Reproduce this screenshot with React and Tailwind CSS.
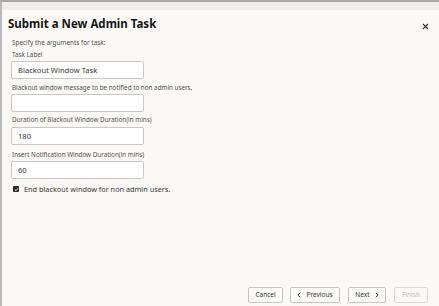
import React from "react";

const fields = [
  { label: "Task Label", value: "Blackout Window Task", gap: "mt-[2px]", inGap: "mt-[1px]" },
  { label: "Blackout window message to be notified to non admin users.", value: "", gap: "mt-[4px]", inGap: "mt-[1px]" },
  { label: "Duration of Blackout Window Duration(in mins)", value: "180", gap: "mt-[3px]", inGap: "mt-[2px]" },
  { label: "Insert Notification Window Duration(in mins)", value: "60", gap: "mt-[5px]", inGap: "mt-[1px]" },
];

export default function App() {
  return (
    <div
      className="w-[439px] h-[306px] bg-[#faf9f7] border-t-2 border-l-2 border-t-[#a8a8a8] border-l-[#b8b8b8] flex flex-col text-[#161513] overflow-hidden"
      style={{ fontFamily: '"Noto Sans", "Open Sans", sans-serif' }}
    >
      {/* top strip */}
      <div className="h-[8px] bg-[#efeeec]" />

      {/* header */}
      <div className="flex items-center justify-between pl-[6px] pr-[10px] mt-[6px] h-[16px]">
        <h1 className="text-[11.5px] leading-[16px] font-bold">Submit a New Admin Task</h1>
        <svg width="7" height="7" viewBox="0 0 7 7" className="mt-[4px]">
          <path d="M1 1L6 6M6 1L1 6" stroke="#3b3936" strokeWidth="1.2" />
        </svg>
      </div>

      {/* body */}
      <div className="pl-[9px] flex flex-col">
        <div className="mt-[6px] text-[6.4px] leading-[10px] text-[#55524e] pl-[1px]">Specify the arguments for task:</div>
        {fields.map((f) => (
          <div key={f.label} className={`flex flex-col ${f.gap}`}>
            <label className="text-[6.3px] leading-[10px] text-[#55524e] pl-[1px]">{f.label}</label>
            <input
              type="text"
              defaultValue={f.value}
              className={`${f.inGap} w-[133px] h-[18px] bg-white border border-[#cbc8c4] rounded-[2px] px-[6px] text-[7.6px] text-[#3a3835] outline-none`}
            />
          </div>
        ))}
        <div className="mt-[5px] h-[10px] flex items-center gap-[5px] pl-[2px]">
          <span className="w-[6px] h-[6px] bg-[#2b2a28] rounded-[1px] flex items-center justify-center">
            <svg width="5" height="5" viewBox="0 0 5 5">
              <path d="M0.8 2.6L2 3.7L4.2 1.2" stroke="#fff" strokeWidth="0.9" fill="none" />
            </svg>
          </span>
          <span className="text-[7.3px] leading-[10px] text-[#3a3835]">End blackout window for non admin users.</span>
        </div>
      </div>

      <div className="flex-1" />

      {/* footer */}
      <div className="flex items-center justify-end pr-[11px] pb-[3px]">
        <button className="h-[16px] w-[35px] border border-[#c9c6c2] bg-[#fbfaf8] rounded-[2px] text-[6.5px] text-[#3a3835]">
          Cancel
        </button>
        <button className="ml-[7px] h-[16px] w-[50px] border border-[#c9c6c2] bg-[#fbfaf8] rounded-[2px] text-[6.5px] text-[#3a3835] flex items-center justify-center gap-[5px]">
          <svg width="4" height="6" viewBox="0 0 4 6">
            <path d="M3 0.8L1 3L3 5.2" stroke="#3a3835" strokeWidth="1" fill="none" />
          </svg>
          Previous
        </button>
        <button className="ml-[8px] h-[16px] w-[38px] border border-[#c9c6c2] bg-[#fbfaf8] rounded-[2px] text-[6.5px] text-[#3a3835] flex items-center justify-center gap-[5px]">
          Next
          <svg width="4" height="6" viewBox="0 0 4 6">
            <path d="M1 0.8L3 3L1 5.2" stroke="#3a3835" strokeWidth="1" fill="none" />
          </svg>
        </button>
        <button className="ml-[8px] h-[16px] w-[34px] border border-[#dedbd7] bg-[#faf9f7] rounded-[2px] text-[6.5px] text-[#c4c1bc]">
          Finish
        </button>
      </div>
    </div>
  );
}
